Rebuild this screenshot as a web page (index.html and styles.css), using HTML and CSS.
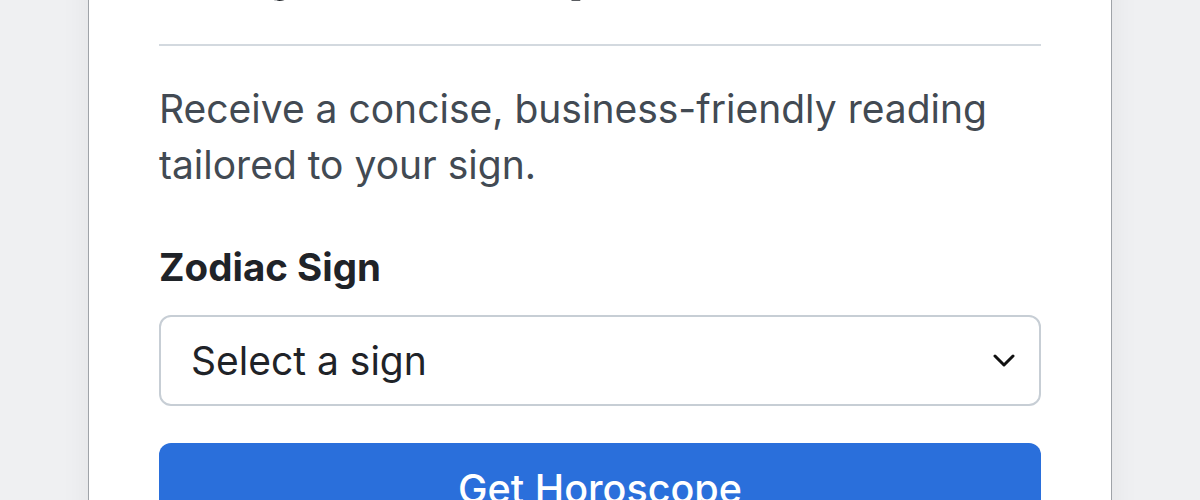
FILE: index.html
```html
<!DOCTYPE html>
<html lang="en">
<head>
<meta charset="utf-8">
<title>Daily Horoscope</title>
<link rel="stylesheet" href="styles.css">
</head>
<body>
<main class="page">
  <section class="card">
    <h1 class="title">Daily Horoscope</h1>
    <hr class="rule">
    <p class="lead">Receive a concise, business-friendly reading tailored to your sign.</p>
    <form class="form">
      <label class="label" for="sign">Zodiac Sign</label>
      <div class="select-wrap">
        <select id="sign" class="select">
          <option>Select a sign</option>
          <option>Aries</option>
          <option>Taurus</option>
          <option>Gemini</option>
        </select>
        <svg class="chevron" width="22" height="14" viewBox="0 0 22 14" aria-hidden="true">
          <path d="M2 2 L11 11 L20 2" fill="none" stroke="#111" stroke-width="3" stroke-linecap="round" stroke-linejoin="round"/>
        </svg>
      </div>
      <button type="button" class="btn">Get Horoscope</button>
    </form>
  </section>
</main>
</body>
</html>
```

FILE: styles.css
```css
html, body {
  margin: 0;
  padding: 0;
  height: 100%;
  overflow: hidden;
}
body {
  background: #eff0f2;
  font-family: "Inter", "Liberation Sans", sans-serif;
  color: #1f2328;
}
.page {
  display: flex;
  justify-content: center;
}
.card {
  width: 882px;
  margin-top: -72px;
  padding: 0 70px 60px;
  background: #fff;
  border: 1px solid #9fa3a8;
  border-top: none;
  box-shadow: 0 0 28px rgba(0, 0, 0, 0.06);
}
.title {
  margin: 0;
  font-size: 60px;
  line-height: 76px;
  font-weight: 700;
  color: #1f2328;
}
.rule {
  margin: 40px 0 0;
  border: none;
  height: 2px;
  background: #d3d9df;
}
.lead {
  margin: 35px 0 0;
  font-size: 39px;
  line-height: 56px;
  color: #424a53;
}
.form {
  display: flex;
  flex-direction: column;
}
.label {
  margin-top: 52px;
  font-size: 38.5px;
  line-height: 44px;
  font-weight: 700;
  color: #1f2328;
}
.select-wrap {
  position: relative;
  margin-top: 26px;
}
.select {
  appearance: none;
  -webkit-appearance: none;
  width: 100%;
  height: 91px;
  box-sizing: border-box;
  padding: 0 60px 0 30px;
  border: 2px solid #c7ced5;
  border-radius: 12px;
  background: #fff;
  font-family: inherit;
  font-size: 39px;
  color: #1f2328;
}
.chevron {
  position: absolute;
  right: 26px;
  top: 39px;
}
.btn {
  margin-top: 37px;
  height: 92px;
  border: none;
  border-radius: 12px;
  background: #2a6fdb;
  color: #fff;
  font-family: inherit;
  font-size: 39.5px;
  font-weight: 500;
}
```
